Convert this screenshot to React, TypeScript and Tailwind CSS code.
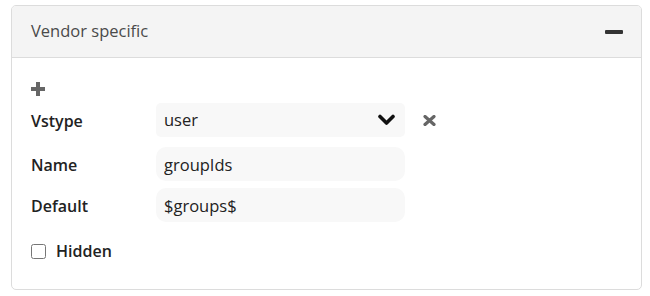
import { useState } from "react";

export default function App() {
  const [hidden, setHidden] = useState(false);

  return (
    <div className="min-h-screen bg-white px-[11px] pt-[5px]" style={{ fontFamily: "'Open Sans', 'DejaVu Sans', sans-serif" }}>
      <div className="w-[631px] h-[285px] rounded-[5px] border border-[#dcdcdc] overflow-hidden">
        {/* Header */}
        <div className="h-[52px] bg-[#f4f4f4] border-b border-[#dcdcdc] flex items-center justify-between pl-[19px] pr-[18px]">
          <span className="text-[16.5px] text-[#4a4a4a]">Vendor specific</span>
          <span className="block w-[18px] h-[4px] bg-[#333] rounded-[1px]" />
        </div>

        {/* Body */}
        <div className="pl-[19px] pt-[24px]">
          <svg width="14" height="14" viewBox="0 0 14 14" className="block">
            <rect x="5" y="0" width="4" height="14" fill="#666" />
            <rect x="0" y="5" width="14" height="4" fill="#666" />
          </svg>

          <div className="mt-[7px] flex items-center">
            <label className="w-[125px] pt-[1px] text-[16px] font-semibold text-[#222]">Vstype</label>
            <div className="w-[249px] h-[34px] rounded-[5px] bg-[#f8f8f8] flex items-center justify-between pl-[8px] pr-[10px]">
              <span className="text-[16.5px] text-[#222]">user</span>
              <svg width="17" height="12" viewBox="0 0 17 12" className="block">
                <path d="M2 2.5 L8.5 9 L15 2.5" fill="none" stroke="#111" strokeWidth="3.6" strokeLinecap="round" strokeLinejoin="round" />
              </svg>
            </div>
            <svg width="13" height="11" viewBox="0 0 13 11" className="ml-[18px] block">
              <path d="M2 1.5 L11 9.5 M11 1.5 L2 9.5" stroke="#666" strokeWidth="3.2" strokeLinecap="round" />
            </svg>
          </div>

          <div className="mt-[10px] flex items-center">
            <label className="w-[125px] pt-[1px] text-[16px] font-semibold text-[#222]">Name</label>
            <input
              defaultValue="groupIds"
              className="w-[249px] h-[34px] rounded-[10px] bg-[#f8f8f8] px-[8px] text-[16.5px] text-[#222] outline-none"
            />
          </div>

          <div className="mt-[7px] flex items-center">
            <label className="w-[125px] pt-[1px] text-[16px] font-semibold text-[#222]">Default</label>
            <input
              defaultValue="$groups$"
              className="w-[249px] h-[34px] rounded-[10px] bg-[#f8f8f8] px-[8px] text-[16.5px] text-[#222] outline-none"
            />
          </div>

          <label className="mt-[17px] flex items-center gap-[10px]">
            <input
              type="checkbox"
              checked={hidden}
              onChange={(e) => setHidden(e.target.checked)}
              className="w-[15px] h-[15px] m-0"
            />
            <span className="text-[16px] font-semibold text-[#222]">Hidden</span>
          </label>
        </div>
      </div>
    </div>
  );
}
